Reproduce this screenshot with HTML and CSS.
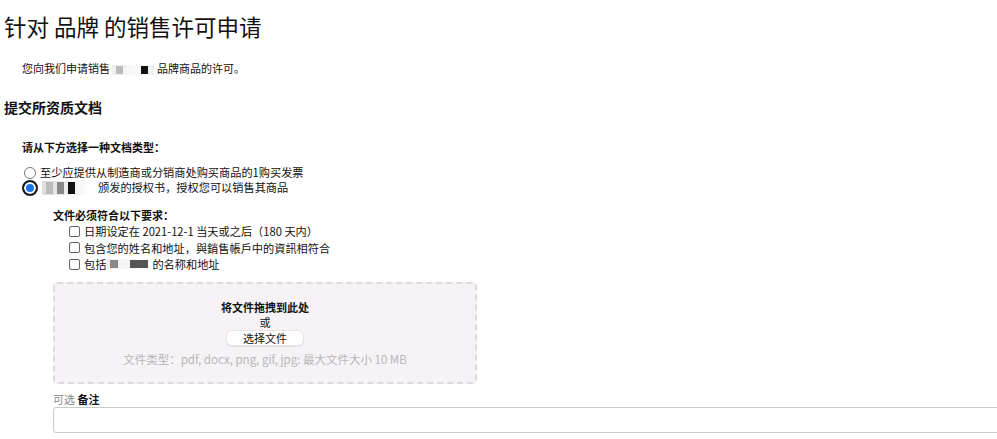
FILE: index.html
```html
<!DOCTYPE html>
<html lang="zh-CN">
<head>
    <meta charset="UTF-8">
    <title>销售许可申请</title>
    <link rel="stylesheet" href="styles.css">
</head>
<body>
    <h1 class="page-title">针对 品牌 的销售许可申请</h1>
    <p class="intro">您向我们申请销售 <span class="redact redact-brand"><i></i><i class="dark"></i></span> 品牌商品的许可。</p>

    <h2 class="section-title">提交所资质文档</h2>

    <div class="doc-type">
        <p class="field-label">请从下方选择一种文档类型：</p>
        <label class="radio-row">
            <span class="radio"></span>
            <span>至少应提供从制造商或分销商处购买商品的1购买发票</span>
        </label>
        <label class="radio-row checked">
            <span class="radio"></span>
            <span class="redact redact-owner"><i></i><i class="mid"></i><i class="dark"></i></span>
            <span>颁发的授权书，授权您可以销售其商品</span>
        </label>
    </div>

    <div class="requirements">
        <p class="field-label">文件必须符合以下要求：</p>
        <ul class="check-list">
            <li><span class="box"></span>日期设定在 2021-12-1 当天或之后（180 天内）</li>
            <li><span class="box"></span>包含您的姓名和地址，與銷售帳戶中的資訊相符合</li>
            <li><span class="box"></span>包括 <span class="redact redact-name"><i class="mid"></i><i class="dark"></i></span>的名称和地址</li>
        </ul>
    </div>

    <div class="dropzone">
        <p class="drop-title">将文件拖拽到此处</p>
        <p class="drop-or">或</p>
        <button class="pick-btn">选择文件</button>
        <p class="drop-hint">文件类型：pdf, docx, png, gif, jpg: 最大文件大小 10 MB</p>
    </div>

    <div class="note">
        <p class="note-label"><span class="optional">可选</span> 备注</p>
        <textarea class="note-input"></textarea>
    </div>
</body>
</html>
```

FILE: styles.css
```css
body {
    font-family: "Noto Sans CJK SC", "Noto Sans", sans-serif;
    color: #111;
    background-color: #fff;
    margin: 0;
    padding: 0 0 0 4px;
    font-size: 11px;
    overflow: hidden;
}

p {
    margin: 0;
}

.page-title {
    font-size: 22.5px;
    font-weight: 400;
    line-height: 30px;
    margin: 11px 0 0 0;
}

.intro {
    margin: 19px 0 0 18px;
    line-height: 16px;
    height: 16px;
}

.redact {
    display: inline-block;
    vertical-align: middle;
    background: linear-gradient(90deg, #e4e4e4, #f4f4f4);
    height: 10px;
}

.redact i {
    display: inline-block;
    vertical-align: top;
    height: 8px;
    width: 7px;
    margin: 1px 0 0 8px;
    background-color: #bbb;
}

.redact i.mid {
    background-color: #888;
}

.redact i.dark {
    background-color: #111;
}

.redact-brand {
    width: 42px;
    background: linear-gradient(90deg, #eee, #fafafa 60%, #eee);
}

.redact-brand i {
    margin-left: 4px;
}

.redact-brand i.dark {
    margin-left: 18px;
}

.redact-owner {
    width: 48px;
    height: 14px;
    margin: 0 8px 0 2px;
    background: linear-gradient(90deg, #ddd, #f2f2f2 70%, #fff);
}

.redact-owner i {
    height: 12px;
    margin-left: 4px;
}

.redact-name {
    width: 46px;
    background: linear-gradient(90deg, #f2f2f2, #fafafa);
}

.redact-name i.mid {
    width: 8px;
    margin-left: 4px;
}

.redact-name i.dark {
    width: 18px;
    margin-left: 12px;
    background-color: #555;
}

.section-title {
    font-size: 14px;
    font-weight: 700;
    line-height: 20px;
    margin: 21px 0 0 0;
}

.field-label {
    font-weight: 700;
    line-height: 16px;
}

.doc-type {
    margin: 22px 0 0 18px;
}

.doc-type .field-label {
    margin-bottom: 10px;
}

.radio-row {
    display: flex;
    align-items: center;
    height: 15px;
    line-height: 15px;
    font-size: 11.2px;
}

.radio {
    box-sizing: border-box;
    width: 12px;
    height: 12px;
    border: 1px solid #777;
    border-radius: 50%;
    margin: 0 4px 0 2px;
    background-color: #fff;
}

.radio-row.checked .radio {
    width: 16px;
    height: 16px;
    margin: 0 2px 0 0;
    border: 2px solid #1b1b1b;
    background-color: #1a73e8;
    box-shadow: inset 0 0 0 2px #fff;
}

.requirements {
    margin: 12px 0 0 49px;
}

.check-list {
    list-style: none;
    margin: 0 0 0 16px;
    padding: 0;
}

.check-list li {
    display: flex;
    align-items: center;
    height: 16.5px;
    line-height: 16px;
    font-size: 11.2px;
}

.box {
    box-sizing: border-box;
    width: 11px;
    height: 11px;
    border: 1px solid #666;
    border-radius: 2px;
    margin-right: 4px;
}

.dropzone {
    box-sizing: border-box;
    width: 424px;
    height: 102px;
    margin: 9px 0 0 49px;
    background-color: #f6f2f5;
    border: 2px dashed #dedbde;
    border-radius: 4px;
    text-align: center;
    padding-top: 15px;
}

.drop-title {
    font-weight: 700;
    line-height: 16px;
}

.drop-or {
    line-height: 15px;
}

.pick-btn {
    font-family: inherit;
    font-size: 11px;
    width: 78px;
    height: 16px;
    line-height: 14px;
    padding: 0;
    border: 1px solid #e8e4e8;
    border-radius: 6px;
    background-color: #fff;
    box-shadow: 0 1px 1px rgba(0, 0, 0, 0.08);
    color: #111;
}

.drop-hint {
    color: #b9b6b9;
    font-size: 11.5px;
    line-height: 16px;
    margin-top: 5px;
}

.note {
    margin: 8px 0 0 49px;
}

.note-label {
    font-weight: 700;
    line-height: 14px;
}

.optional {
    font-weight: 400;
    color: #888;
}

.note-input {
    display: block;
    box-sizing: border-box;
    width: 960px;
    height: 26px;
    margin-top: 1px;
    border: 1px solid #c9c9c9;
    border-radius: 3px;
    resize: none;
}
```
